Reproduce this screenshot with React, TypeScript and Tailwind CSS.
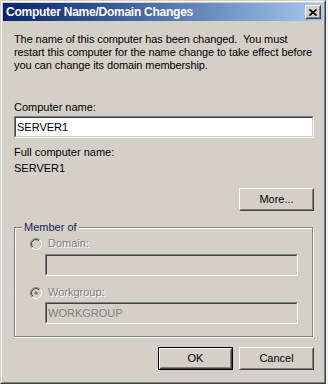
import React from 'react';

const font = "font-['Liberation_Sans',Arial,sans-serif]";

function Raised({ children, isDefault = false, className = '' }: { children: React.ReactNode; isDefault?: boolean; className?: string }) {
  const face = (
    <div className="h-full w-full border border-t-white border-l-white border-r-[#404040] border-b-[#404040]">
      <div className="h-full w-full border border-t-[#d4d0c8] border-l-[#d4d0c8] border-r-[#808080] border-b-[#808080] flex items-center justify-center bg-[#d4d0c8]">
        {children}
      </div>
    </div>
  );
  if (isDefault) return <div className={`border border-black ${className}`}>{face}</div>;
  return <div className={className}>{face}</div>;
}

function Sunken({ value, disabled = false, className = '' }: { value: string; disabled?: boolean; className?: string }) {
  return (
    <div className={`border border-t-[#808080] border-l-[#808080] border-r-white border-b-white ${className}`}>
      <div className={`h-full w-full border border-t-[#404040] border-l-[#404040] border-r-[#d4d0c8] border-b-[#d4d0c8] flex items-center pl-px ${disabled ? 'bg-[#d4d0c8] text-[#808080]' : 'bg-white text-black'}`}>
        {value}
      </div>
    </div>
  );
}

function Radio({ id, checked = false }: { id: string; checked?: boolean }) {
  return (
    <svg width="12" height="12" viewBox="0 0 12 12" className="shrink-0">
      <defs>
        <linearGradient id={`${id}-o`} x1="0" y1="0" x2="1" y2="1">
          <stop offset="0.5" stopColor="#808080" />
          <stop offset="0.5" stopColor="#ffffff" />
        </linearGradient>
        <linearGradient id={`${id}-i`} x1="0" y1="0" x2="1" y2="1">
          <stop offset="0.5" stopColor="#404040" />
          <stop offset="0.5" stopColor="#d4d0c8" />
        </linearGradient>
      </defs>
      <circle cx="6" cy="6" r="5.5" fill="none" stroke={`url(#${id}-o)`} strokeWidth="1" />
      <circle cx="6" cy="6" r="4.5" fill="#d4d0c8" stroke={`url(#${id}-i)`} strokeWidth="1" />
      {checked && <circle cx="6" cy="6" r="1.8" fill="#808080" />}
    </svg>
  );
}

export default function App() {
  return (
    <div className={`w-[328px] h-[384px] bg-[#eef2f8] ${font} text-[11px] leading-[13px] text-black`}>
      <div className="w-[326px] h-[384px] bg-[#d4d0c8] border border-t-[#d4d0c8] border-l-[#d4d0c8] border-r-[#404040] border-b-[#404040]">
        <div className="h-full border border-t-white border-l-white border-r-[#808080] border-b-[#808080] p-px flex flex-col">
          {/* Title bar */}
          <div className="h-[18px] shrink-0 flex items-center justify-between bg-gradient-to-r from-[#0a246a] to-[#a6caf0] pl-[3px] pr-[2px]">
            <span className="text-white font-bold text-[12px] leading-[18px] tracking-[-0.25px]">Computer Name/Domain Changes</span>
            <Raised className="w-[16px] h-[14px]">
              <svg width="8" height="7" viewBox="0 0 8 7">
                <path d="M0.5 0.5 L7.5 6.5 M7.5 0.5 L0.5 6.5" stroke="#000" strokeWidth="1.7" />
              </svg>
            </Raised>
          </div>

          {/* Body */}
          <div className="pl-[11px] w-[311px] flex flex-col">
            <p className="mt-[12px] w-[300px] tracking-[-0.1px]">
              The name of this computer has been changed.&nbsp; You must restart this computer for the name change to take effect before you can change its domain membership.
            </p>
            <div className="mt-[29px]">Computer name:</div>
            <Sunken value="SERVER1" className="mt-[2px] w-[300px] h-[22px]" />
            <div className="mt-[8px]">Full computer name:</div>
            <div className="mt-[3px]">SERVER1</div>
            <div className="mt-[13px] flex justify-end w-[300px]">
              <Raised className="w-[75px] h-[23px]">More...</Raised>
            </div>

            {/* Member of group */}
            <div className="relative mt-[16px] w-[299px] h-[110px] border border-[#808080] shadow-[1px_1px_0_#fff,inset_1px_1px_0_#fff] pl-[15px] flex flex-col">
              <span className="absolute left-[7px] top-[-7px] bg-[#d4d0c8] px-[2px] text-[#1c1c60]">Member of</span>
              <div className="mt-[9px] flex items-center gap-[6px] h-[13px]">
                <Radio id="rd" />
                <span className="text-[#808080] [text-shadow:1px_1px_0_#fff]">Domain:</span>
              </div>
              <Sunken value="" disabled className="mt-[4px] ml-[15px] w-[253px] h-[22px]" />
              <div className="mt-[10px] flex items-center gap-[6px] h-[13px]">
                <Radio id="rw" checked />
                <span className="text-[#808080] [text-shadow:1px_1px_0_#fff]">Workgroup:</span>
              </div>
              <Sunken value="WORKGROUP" disabled className="mt-[3px] ml-[15px] w-[253px] h-[22px]" />
            </div>

            <div className="mt-[10px] flex justify-end gap-[6px] w-[300px]">
              <Raised isDefault className="w-[75px] h-[23px]">OK</Raised>
              <Raised className="w-[75px] h-[23px]">Cancel</Raised>
            </div>
          </div>
        </div>
      </div>
    </div>
  );
}
